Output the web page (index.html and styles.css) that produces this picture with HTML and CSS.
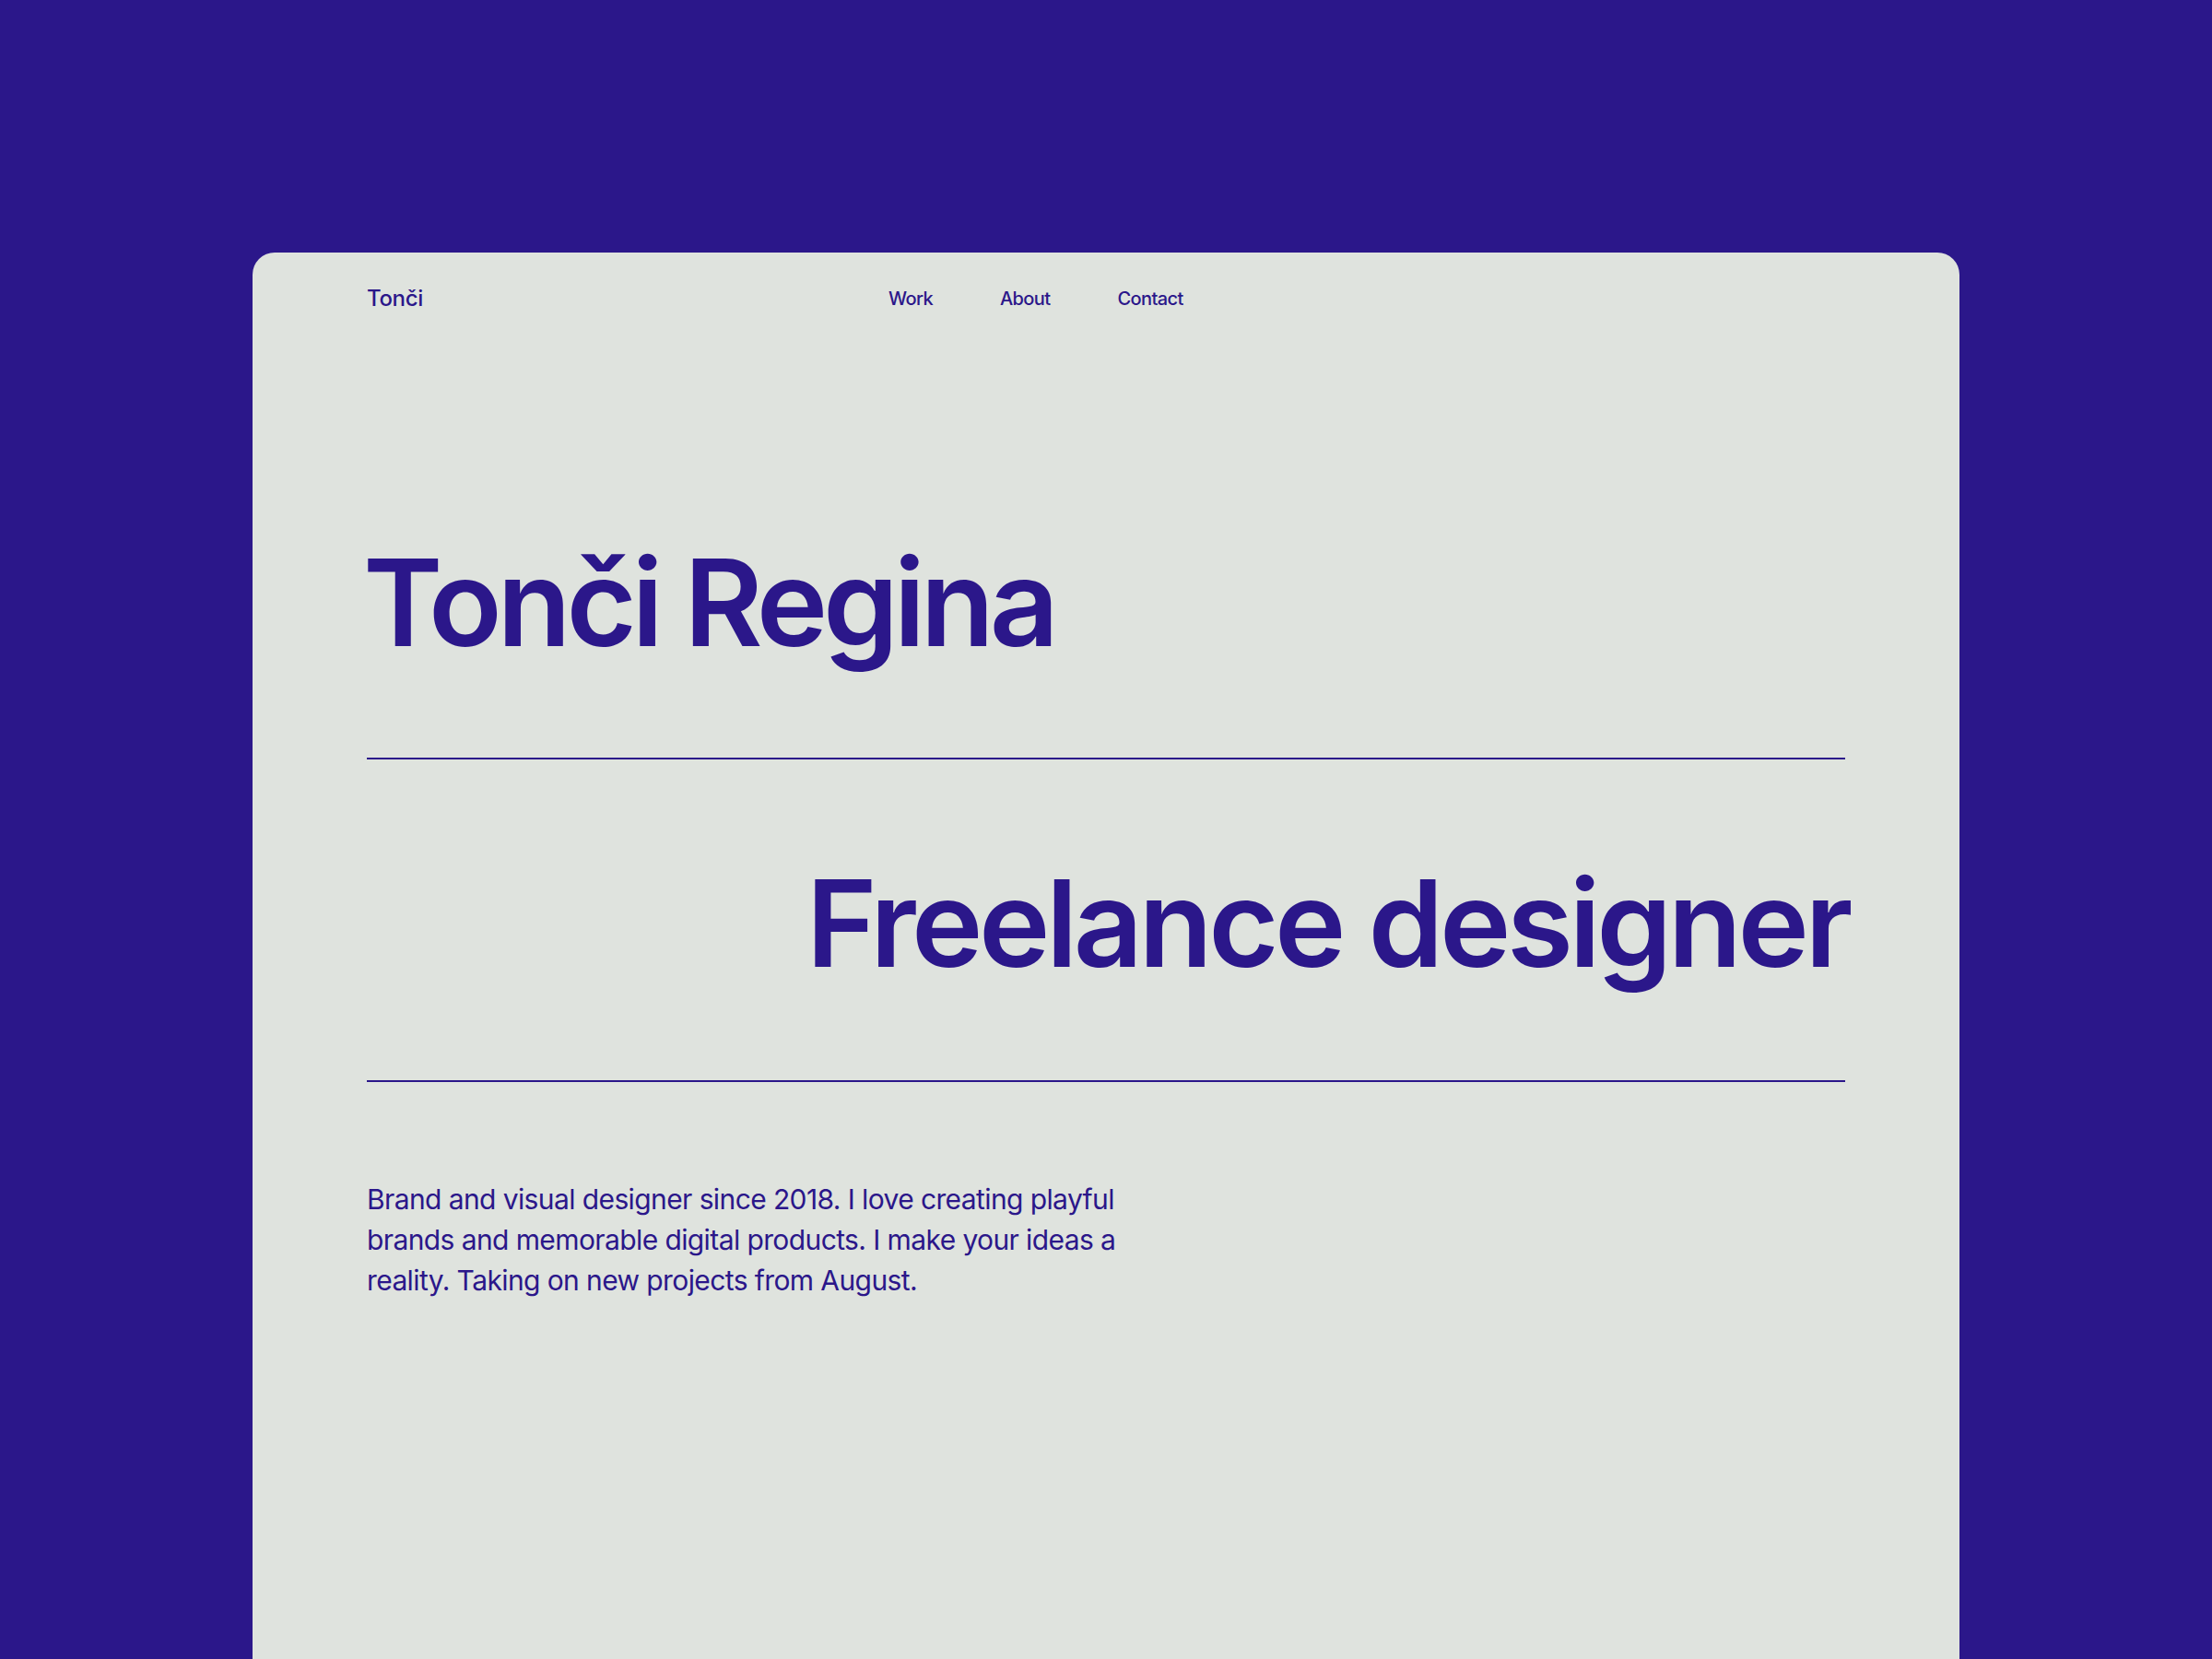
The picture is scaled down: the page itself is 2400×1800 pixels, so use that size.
FILE: index.html
```html
<!DOCTYPE html>
<html lang="en">
<head>
<meta charset="utf-8">
<title>Tonči Regina — Freelance designer</title>
<link rel="stylesheet" href="styles.css">
</head>
<body>
  <main class="card">
    <header class="topbar">
      <a class="logo" href="#">Tonči</a>
      <nav class="nav">
        <a href="#">Work</a>
        <a href="#">About</a>
        <a href="#">Contact</a>
      </nav>
    </header>

    <section class="hero">
      <h1 class="name">Tonči Regina</h1>
      <hr class="rule">
      <h2 class="role">Freelance designer</h2>
      <hr class="rule">
      <p class="intro">Brand and visual designer since 2018. I love creating playful brands and memorable digital products. I make your ideas a reality. Taking on new projects from August.</p>
    </section>
  </main>
</body>
</html>
```

FILE: styles.css
```css
html, body {
  margin: 0;
  padding: 0;
}

body {
  background: #2b178a;
  color: #2b178a;
  font-family: Inter, "Noto Sans", "Liberation Sans", sans-serif;
  padding: 274px 274px 0;
  height: 1800px;
  overflow: hidden;
  box-sizing: border-box;
}

.card {
  background: #dfe3de;
  border-radius: 24px 24px 0 0;
  min-height: 1600px;
  padding: 38px 124px 0;
}

a {
  color: inherit;
  text-decoration: none;
}

/* top bar: logo on the left, links starting part-way across */
.topbar {
  display: grid;
  grid-template-columns: 566px auto;
  align-items: baseline;
}

.logo {
  font-size: 24px;
  line-height: 1;
  font-weight: 500;
  letter-spacing: -0.015em;
}

.nav {
  display: flex;
  gap: 73px;
  font-size: 20px;
  line-height: 1;
  font-weight: 500;
  letter-spacing: -0.03em;
  position: relative;
  top: -1px;
}

.hero {
  padding-top: 252px;
}

.name,
.role {
  margin: 0;
  font-size: 131px;
  line-height: 1;
  font-weight: 600;
}

.name {
  letter-spacing: -0.04em;
  margin-left: -4px;
  margin-bottom: 103px;
}

.role {
  letter-spacing: -0.034em;
  text-align: right;
  margin: 112px -4px 105px 0;
}

.rule {
  margin: 0;
  border: 0;
  height: 2px;
  background: #2b178a;
}

.intro {
  margin: 105px 0 0;
  max-width: 820px;
  font-size: 30px;
  line-height: 44px;
  font-weight: 400;
  letter-spacing: -0.02em;
}
```
